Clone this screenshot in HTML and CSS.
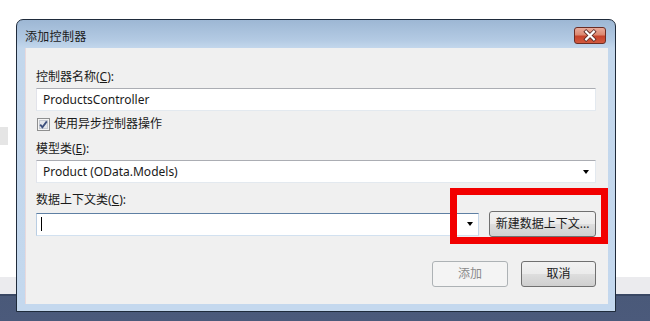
FILE: index.html
```html
<!DOCTYPE html>
<html lang="zh-CN">
<head>
<meta charset="utf-8">
<title>添加控制器</title>
<link rel="stylesheet" href="styles.css">
</head>
<body>
<div class="window">
  <div class="titlebar">
    <span class="title">添加控制器</span>
    <button class="close" aria-label="关闭">
      <svg width="31" height="15" viewBox="0 0 31 15">
        <path d="M11.5 3.5 L19.5 11.5 M19.5 3.5 L11.5 11.5" stroke="#5a2a25" stroke-width="4" stroke-linecap="square" fill="none"/>
        <path d="M11.5 3.5 L19.5 11.5 M19.5 3.5 L11.5 11.5" stroke="#ffffff" stroke-width="2.2" stroke-linecap="square" fill="none"/>
      </svg>
    </button>
  </div>
  <div class="client">
    <div class="label">控制器名称(<u>C</u>):</div>
    <div class="textbox">ProductsController</div>
    <div class="check-row">
      <span class="checkbox">
        <svg width="13" height="13" viewBox="0 0 13 13">
          <rect x="0.5" y="0.5" width="12" height="12" fill="#f4f4f4" stroke="#8e8f8f"/>
          <rect x="2.5" y="2.5" width="8" height="8" fill="#e3e6ea" stroke="#c6cbd3"/>
          <path d="M3.2 6.6 L5.4 9.2 L9.8 3.4" stroke="#3c4f7c" stroke-width="1.8" fill="none"/>
        </svg>
      </span>
      <span>使用异步控制器操作</span>
    </div>
    <div class="label gap">模型类(<u>E</u>):</div>
    <div class="combo">
      <span>Product (OData.Models)</span>
      <span class="arrow"></span>
    </div>
    <div class="label gap">数据上下文类(<u>C</u>):</div>
    <div class="context-row">
      <div class="combo focused">
        <span class="caret"></span>
        <span class="arrow"></span>
      </div>
      <button class="btn wide">新建数据上下文...</button>
    </div>
    <div class="actions">
      <button class="btn disabled">添加</button>
      <button class="btn">取消</button>
    </div>
  </div>
</div>
<div class="highlight"></div>
</body>
</html>
```
FILE: styles.css
```css
html, body {
  margin: 0;
  padding: 0;
}
body {
  width: 650px;
  height: 321px;
  overflow: hidden;
  position: relative;
  font-family: "Noto Sans", "Noto Sans CJK SC", sans-serif;
  font-size: 12px;
  color: #1a1a1a;
  background:
    linear-gradient(#e5e5e5, #e5e5e5) 0 127px / 8px 18px no-repeat,
    linear-gradient(to bottom, #ffffff 0, #ffffff 277px, #ebebee 277px, #ebebee 294px, #394763 294px, #394763 296px, #4a5979 296px, #4b5a7b 321px);
  display: flex;
  padding: 19px 0 0 16px;
  box-sizing: border-box;
}
.window {
  width: 600px;
  height: 293px;
  box-sizing: border-box;
  border: 1px solid #1f2b3b;
  border-radius: 7px 7px 0 0;
  background: linear-gradient(to bottom, #9db7d4 0, #b3cae3 20px, #c3d7ec 28px, #c4d8ee 100%);
  padding: 0 7px 7px 8px;
  display: flex;
  flex-direction: column;
}
.titlebar {
  height: 28px;
  padding-top: 6px;
  box-sizing: border-box;
  display: flex;
  align-items: center;
  justify-content: space-between;
}
.title {
  font-size: 12px;
  line-height: 16px;
  color: #1c1c1c;
  letter-spacing: 0.3px;
}
.close {
  width: 32px;
  height: 17px;
  margin-right: 2px;
  margin-top: -3px;
  padding: 0;
  border: 1px solid #6b2d24;
  border-radius: 3px;
  background: linear-gradient(to bottom, #e9ab9b 0, #dc8870 45%, #c6432b 55%, #d2593e 100%);
  display: flex;
  align-items: center;
  justify-content: center;
}
.close svg {
  display: block;
}
.client {
  flex: 1;
  background: #f0f0f0;
  border-left: 1px solid #e8d9dc;
  padding: 21px 12px 0 10px;
  display: flex;
  flex-direction: column;
}
.label {
  line-height: 16px;
  height: 16px;
}
.label u {
  text-decoration: underline;
}
.label.gap {
  margin-top: 9px;
}
.textbox {
  margin-top: 3px;
  height: 23px;
  box-sizing: border-box;
  background: #fff;
  border: 1px solid;
  border-color: #abadb3 #e3e9ef #e3e9ef #e2e3ea;
  padding: 0 6px;
  line-height: 21px;
  font-size: 12px;
}
.check-row {
  margin-top: 5px;
  height: 16px;
  display: flex;
  align-items: center;
  gap: 4px;
  padding-left: 1px;
  line-height: 16px;
}
.checkbox {
  width: 13px;
  height: 13px;
  display: block;
}
.checkbox svg {
  display: block;
}
.combo {
  margin-top: 3px;
  height: 23px;
  box-sizing: border-box;
  background: #fff;
  border: 1px solid;
  border-color: #abadb3 #e3e9ef #e3e9ef #e2e3ea;
  padding: 0 6px;
  line-height: 21px;
  display: flex;
  align-items: center;
  justify-content: space-between;
}
.arrow {
  width: 0;
  height: 0;
  border-left: 3.5px solid transparent;
  border-right: 3.5px solid transparent;
  border-top: 4px solid #000;
  margin-right: 0;
}
.context-row {
  margin-top: 3px;
  height: 26px;
  display: flex;
  align-items: center;
  gap: 10px;
}
.combo.focused {
  margin-top: 0;
  width: 444px;
  border-color: #5e7fa3 #c5d6e8 #d2e1f0 #b9cde2;
  padding-left: 4px;
  padding-right: 5px;
}
.caret {
  width: 1px;
  height: 14px;
  background: #000;
}
.btn {
  height: 26px;
  box-sizing: border-box;
  border: 1px solid #707070;
  border-radius: 3px;
  background: linear-gradient(to bottom, #f2f2f2 0, #ebebeb 48%, #dddddd 52%, #cfcfcf 100%);
  font-family: "Noto Sans", "Noto Sans CJK SC", sans-serif;
  font-size: 12px;
  color: #1a1a1a;
  padding: 0;
  line-height: 22px;
}
.btn.wide {
  width: 107px;
}
.actions {
  margin-top: 24px;
  display: flex;
  justify-content: flex-end;
  gap: 13px;
}
.actions .btn {
  width: 75px;
}
.btn.disabled {
  border-color: #adb2b5;
  background: #f4f4f4;
  color: #8a8a8a;
  width: 76px;
}
.highlight {
  position: absolute;
  left: 450px;
  top: 188px;
  width: 158px;
  height: 56px;
  box-sizing: border-box;
  border: 7px solid #f20000;
}
```
